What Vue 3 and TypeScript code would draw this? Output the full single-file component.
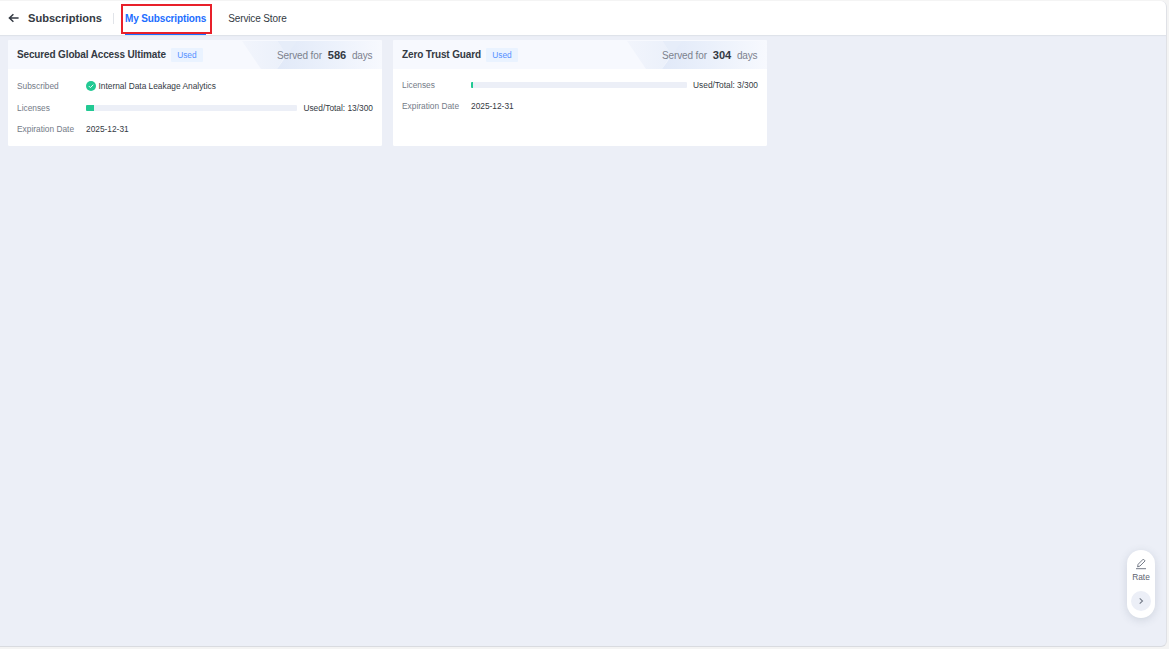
<script setup lang="ts">
interface Subscription {
  name: string
  days: number
  features: string[]
  used: number
  total: number
  expires: string
}

const subscriptions: Subscription[] = [
  {
    name: 'Secured Global Access Ultimate',
    days: 586,
    features: ['Internal Data Leakage Analytics'],
    used: 13,
    total: 300,
    expires: '2025-12-31',
  },
  { name: 'Zero Trust Guard', days: 304, features: [], used: 3, total: 300, expires: '2025-12-31' },
]

const percent = (s: Subscription) => `${Math.floor((s.used / s.total) * 100)}%`
</script>

<template>
  <div class="shell">
    <div class="window">
      <header class="topbar">
        <svg class="back" viewBox="0 0 12 12" width="12" height="12">
          <path d="M10.6 6H1.4M5.4 2.2L1.4 6l4 3.8" fill="none" stroke="#343a43" stroke-width="1.5" />
        </svg>
        <h1>Subscriptions</h1>
        <span class="divider"></span>
        <nav>
          <a class="tab active">My Subscriptions<span class="highlight"></span></a>
          <a class="tab">Service Store</a>
        </nav>
      </header>

      <main class="cards">
        <section v-for="s in subscriptions" :key="s.name" class="card">
          <div class="card-head">
            <svg class="pattern" viewBox="0 0 140 29" width="140" height="29">
              <defs>
                <linearGradient id="band" x1="0" x2="1">
                  <stop offset="0" stop-color="#f2f5fc" />
                  <stop offset="1" stop-color="#e9effa" />
                </linearGradient>
                <linearGradient id="glow" x1="0" x2="1">
                  <stop offset="0" stop-color="#e1e9f8" />
                  <stop offset="0.45" stop-color="#eaf0fb" />
                  <stop offset="1" stop-color="#f7f9fe" />
                </linearGradient>
              </defs>
              <path d="M0 1H53L35 29H19Z" fill="url(#band)" />
              <path d="M36 1H140V29H35L45 15Z" fill="url(#glow)" />
              <path d="M36 1H55L45 15Z" fill="#e6edf9" />
            </svg>
            <h2>{{ s.name }}</h2>
            <span class="tag">Used</span>
            <p class="served">Served for <b>{{ s.days }}</b> days</p>
          </div>
          <div class="rows" :class="{ compact: !s.features.length }">
            <div v-if="s.features.length" class="row">
              <span class="label">Subscribed</span>
              <span v-for="f in s.features" :key="f" class="feature">
                <svg viewBox="0 0 10 10" width="10" height="10">
                  <circle cx="5" cy="5" r="5" fill="#22c993" />
                  <path d="M2.8 5l1.6 1.6 2.9-2.9" fill="none" stroke="#fff" stroke-width="0.9" />
                </svg>
                {{ f }}
              </span>
            </div>
            <div class="row">
              <span class="label">Licenses</span>
              <span class="track"><span class="fill" :style="{ width: percent(s) }"></span></span>
              <span class="usage">Used/Total: {{ s.used }}/{{ s.total }}</span>
            </div>
            <div class="row">
              <span class="label">Expiration Date</span>
              <span>{{ s.expires }}</span>
            </div>
          </div>
        </section>
      </main>

      <aside class="rate">
        <svg viewBox="0 0 12 12" width="12" height="12" fill="none" stroke="#747b88" stroke-width="1">
          <path d="M1 10.7h10M2.6 8.9l.5-2.6L8.3 1.1l1.8 1.8-5.2 5.2z" />
        </svg>
        <span>Rate</span>
        <button aria-label="Expand">
          <svg viewBox="0 0 8 8" width="8" height="8">
            <path d="M2.7 1.4L5.5 4 2.7 6.6" fill="none" stroke="#747b88" stroke-width="1.1" />
          </svg>
        </button>
      </aside>
    </div>
  </div>
</template>

<style>
body {
  background: #f4f4f4;
}
</style>

<style scoped>
.shell {
  box-sizing: border-box;
  width: 1169px;
  height: 649px;
  padding: 1px 2px 2px 0;
  overflow: hidden;
  background: #f4f4f4;
  font-family: "Liberation Sans", Arial, sans-serif;
  font-size: 8.35px;
  color: #343a43;
}
.window {
  position: relative;
  box-sizing: border-box;
  height: 646px;
  overflow: hidden;
  background: #eceff7;
  border-right: 1px solid #dfe1e6;
  border-bottom: 1px solid #d9dbe0;
  border-radius: 0 6px 6px 0;
}
.topbar {
  display: flex;
  align-items: center;
  box-sizing: border-box;
  height: 34px;
  padding-left: 8px;
  background: #fff;
  box-shadow: 0 1px 1px #dfe3ea;
}
.back {
  margin-right: 8px;
}
h1, h2, p {
  margin: 0;
}
h1 {
  font-size: 11.1px;
  line-height: 14px;
}
.divider {
  width: 1px;
  height: 11px;
  margin: 0 11px 0 11px;
  background: #e1e4e9;
}
nav {
  display: flex;
  gap: 22px;
  height: 34px;
}
.tab {
  position: relative;
  font-size: 10px;
  letter-spacing: -0.13px;
  line-height: 35px;
  height: 34px;
  white-space: nowrap;
}
.active {
  font-weight: bold;
  color: #1c6eff;
  box-shadow: inset 0 -2px #1c6eff;
}
.highlight {
  position: absolute;
  box-sizing: border-box;
  left: -4px;
  top: 3px;
  width: 91px;
  height: 29.5px;
  border: 2px solid #e8202a;
}
.cards {
  display: flex;
  gap: 11px;
  padding: 5px 8px;
}
.card {
  width: 374px;
  height: 106px;
  overflow: hidden;
  background: #fff;
  border-radius: 1.5px;
}
.card-head {
  position: relative;
  display: flex;
  align-items: center;
  box-sizing: border-box;
  height: 29px;
  padding: 1px 9.5px 0 9px;
  background: #f7f9fe;
}
.card-head > * {
  position: relative;
}
.card-head > .pattern {
  position: absolute;
  right: 0;
  top: 0;
}
h2 {
  font-size: 10px;
  letter-spacing: -0.14px;
  line-height: 16px;
}
.tag {
  margin: 0 0 1px 5.3px;
  padding: 0 6px;
  height: 14px;
  line-height: 14px;
  color: #5591ff;
  background: #eaf3ff;
  border-radius: 1px;
}
.served {
  margin-left: auto;
  font-size: 10px;
  letter-spacing: -0.13px;
  line-height: 16px;
  color: #7c828e;
}
.served b {
  margin: 0 3px 0 3.2px;
  font-size: 11.1px;
  letter-spacing: 0;
  color: #343a43;
}
.rows {
  display: grid;
  gap: 11.5px;
  padding: 12px 9px 0;
}
.rows.compact {
  gap: 11px;
  padding-top: 11px;
}
.row {
  display: flex;
  align-items: center;
  height: 10px;
  line-height: 10px;
  white-space: nowrap;
}
.label {
  width: 69px;
  color: #747b88;
}
.feature {
  display: flex;
  gap: 2.5px;
}
.track {
  flex: 1;
  height: 6px;
  background: #eceff7;
  border-radius: 1px;
  overflow: hidden;
}
.fill {
  display: block;
  height: 6px;
  background: #22c993;
}
.usage {
  margin-left: 6px;
}
.rate {
  position: absolute;
  right: 11px;
  bottom: 28px;
  display: flex;
  flex-direction: column;
  align-items: center;
  box-sizing: border-box;
  width: 28px;
  height: 68px;
  padding-top: 8px;
  background: #fff;
  border-radius: 14px;
  box-shadow: 0 2px 8px rgba(60, 75, 100, 0.17);
  color: #5c6370;
}
.rate span {
  margin: 2px 0 9px;
  line-height: 10px;
}
.rate button {
  display: grid;
  place-items: center;
  width: 20px;
  height: 20px;
  padding: 0;
  border: 0;
  border-radius: 50%;
  background: #eceff7;
}
</style>
